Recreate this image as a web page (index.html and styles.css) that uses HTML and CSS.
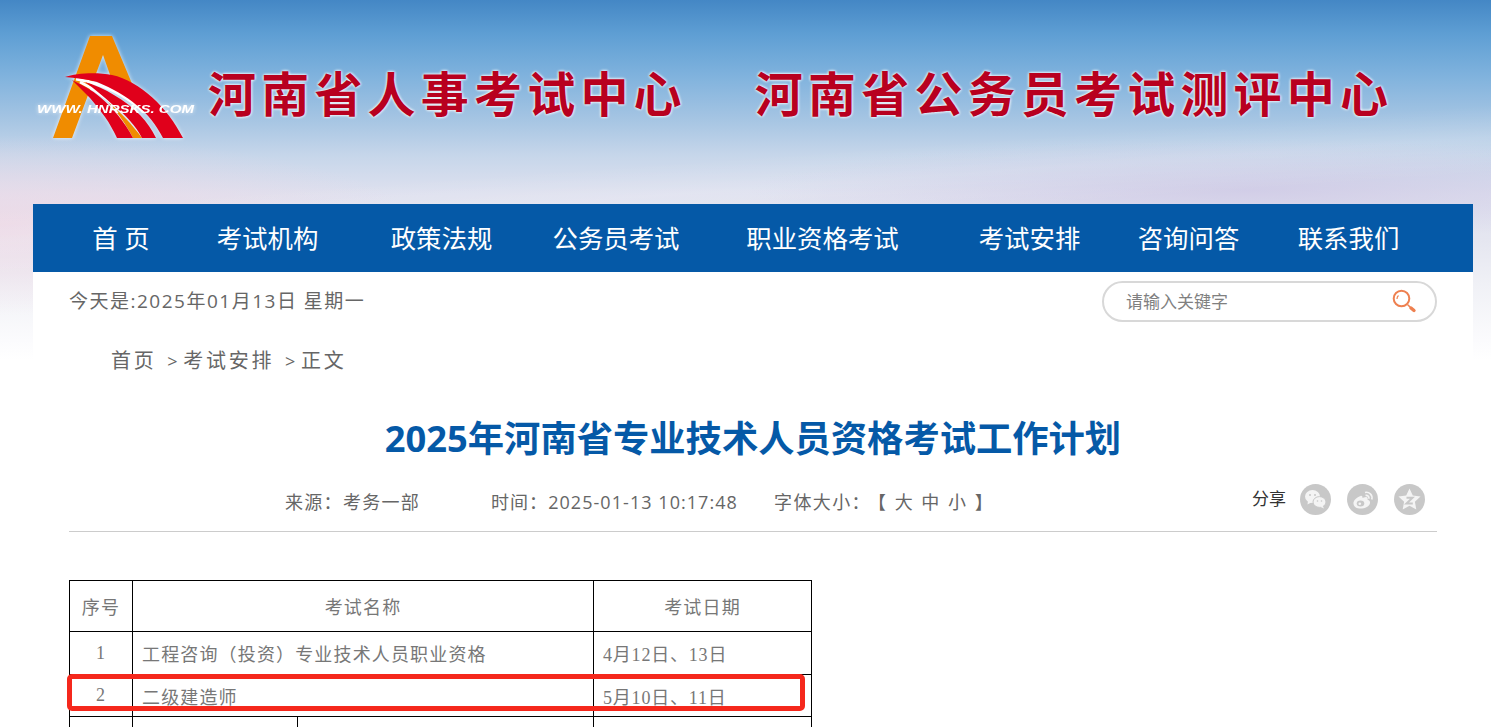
FILE: index.html
```html
<!DOCTYPE html>
<html lang="zh-CN">
<head>
  <meta charset="UTF-8">
  <title>2025年河南省专业技术人员资格考试工作计划</title>
  <link rel="stylesheet" href="styles.css">
</head>
<body>
  <div class="page">

    <header class="banner">
      <svg class="logo" width="170" height="120" viewBox="36 26 170 120">
        <path class="logo-a" d="M90 36 H112 L133 86 H114 L103 55 L72 138 H53 Z"/>
        <path class="logo-stripe" d="M108 102 C120 112 132 124 142 138 H133 C126 124 117 112 108 102 Z"/>
        <path class="logo-line" d="M76 79 C100 83 124 93 144 112"/>
        <path class="logo-line" d="M80 82 C92 88 104 96 116 106"/>
        <path class="logo-arc" d="M65 77 C76 73 97 72 112 75 C140 81 168 108 183 138 H163 C150 112 128 95 97 82 C86 79 75 78 65 77 Z"/>
        <path class="logo-arc" d="M85 82 C105 88 125 100 140 115 C147 122 152 130 156 138 H142 C136 126 125 114 113 105 C104 97 95 89 85 82 Z"/>
        <path class="logo-arc" d="M72 80 C82 85 92 90 100 97 C112 107 125 122 133 138 H117 C113 130 110 124 105 117 C100 110 95 104 90 98 C84 92 78 86 72 80 Z"/>
        <text class="logo-url" x="37" y="113" textLength="157" lengthAdjust="spacingAndGlyphs">WWW. HNRSKS. COM</text>
      </svg>
      <h1 class="site-name">河南省人事考试中心</h1>
      <h1 class="site-name second">河南省公务员考试测评中心</h1>
    </header>

    <main class="wrap">
      <nav class="nav">
        <a href="#">首 页</a>
        <a href="#">考试机构</a>
        <a href="#">政策法规</a>
        <a href="#">公务员考试</a>
        <a href="#">职业资格考试</a>
        <a href="#">考试安排</a>
        <a href="#">咨询问答</a>
        <a href="#">联系我们</a>
      </nav>

      <div class="topbar">
        <span class="today">今天是:2025年01月13日 星期一</span>
        <div class="search">
          <span class="search-text">请输入关键字</span>
          <svg width="26" height="26" viewBox="0 0 26 26">
            <circle class="search-ring" cx="10.5" cy="9.5" r="7.8"/>
            <path class="search-ring thin" d="M6 10 A4.5 4.5 0 0 1 7.5 6.5"/>
            <path class="search-handle" d="M17 16 L19 18"/>
            <path class="search-handle thick" d="M20 19 L23 21.5"/>
          </svg>
        </div>
      </div>

      <div class="crumbs">
        <a href="#">首页</a>
        <span class="crumb-sep">&gt;</span><a href="#">考试安排</a>
        <span class="crumb-sep">&gt;</span><span>正文</span>
      </div>

      <h2 class="title">2025年河南省专业技术人员资格考试工作计划</h2>

      <div class="meta">
        <span class="source">来源：考务一部</span>
        <span class="time">时间：2025-01-13 10:17:48</span>
        <span class="fontsize">字体大小：<span class="size-links">【 大 中 小 】</span></span>
        <div class="share">
          <span class="share-label">分享</span>
          <a class="share-btn" href="#">
            <svg width="31" height="31" viewBox="0 0 31 31">
              <ellipse class="glyph" cx="12.5" cy="12.5" rx="7.5" ry="6.4"/>
              <path class="glyph" d="M8 16.5 L7.5 20.5 L12 18 Z"/>
              <ellipse class="glyph edge" cx="19.5" cy="18" rx="6.5" ry="5.4"/>
              <path class="glyph" d="M22.5 21.5 L24 24.5 L20 22.8 Z"/>
              <circle class="dot" cx="10" cy="11" r="1"/>
              <circle class="dot" cx="15" cy="11" r="1"/>
              <circle class="dot" cx="17.5" cy="17" r=".8"/>
              <circle class="dot" cx="21.5" cy="17" r=".8"/>
            </svg>
          </a>
          <a class="share-btn" href="#">
            <svg width="31" height="31" viewBox="0 0 31 31">
              <path class="glyph" d="M13.5 12 C9 13.5 6 17 6.5 20 C7 23.5 11 25 15 24.5 C20 24 23.5 21 23 18 C22.7 16.5 21.5 16 20.5 15.5 C21 14 20.5 13 19 13 C17.5 13 16 14 15.5 14 C15.5 12.5 15 11.5 13.5 12 Z"/>
              <ellipse class="dot" cx="13.5" cy="19.5" rx="3.8" ry="3"/>
              <circle class="glyph" cx="12.8" cy="19.8" r="1.3"/>
              <path class="wave" d="M18 8.5 C22 7.5 26 11 24.8 15.5"/>
              <path class="wave" d="M18.5 11.5 C20.5 11 22.5 12.7 21.8 14.8"/>
            </svg>
          </a>
          <a class="share-btn" href="#">
            <svg width="31" height="31" viewBox="0 0 31 31">
              <path class="glyph" d="M15.5 4.5 L18.8 11.5 L26.500 12.500 L20.900 17.800 L22.300 25.500 L15.500 21.800 L8.700 25.500 L10.100 17.800 L4.500 12.500 L12.200 11.500 Z"/>
              <path class="z" d="M12.500 13.800 H18.500 L12.500 19.500 H18.800"/>
            </svg>
          </a>
        </div>
      </div>

      <div class="article">
        <table class="exam-table">
          <colgroup>
            <col class="c-no">
            <col class="c-sub">
            <col class="c-name">
            <col class="c-date">
          </colgroup>
          <tr class="row-head">
            <td class="center">序号</td>
            <td class="center" colspan="2">考试名称</td>
            <td class="center">考试日期</td>
          </tr>
          <tr class="row-one">
            <td class="center">1</td>
            <td colspan="2">工程咨询（投资）专业技术人员职业资格</td>
            <td class="date">4月12日、13日</td>
          </tr>
          <tr class="row-two">
            <td class="center">2</td>
            <td colspan="2">二级建造师</td>
            <td class="date">5月10日、11日</td>
          </tr>
          <tr class="row-three">
            <td></td>
            <td></td>
            <td></td>
            <td></td>
          </tr>
        </table>
        <div class="highlight"></div>
      </div>
    </main>
  </div>
</body>
</html>
```

FILE: styles.css
```css
html, body {
  margin: 0;
  padding: 0;
}

body {
  font-family: "Open Sans", "Noto Sans CJK SC", sans-serif;
  color: #666;
  background: #fff;
}

a {
  color: inherit;
  text-decoration: none;
}

.page {
  height: 727px;
  overflow: hidden;
  background:
    linear-gradient(176deg, transparent 45%, rgba(255, 255, 255, 0.12) 52%, transparent 60%) 0 0 / 100% 360px no-repeat,
    radial-gradient(ellipse 420px 90px at 0 225px, rgba(240, 215, 228, 0.75), transparent) 0 0 / 100% 360px no-repeat,
    radial-gradient(ellipse 500px 50px at 1250px 190px, rgba(205, 198, 228, 0.7), transparent) 0 0 / 100% 360px no-repeat,
    linear-gradient(180deg, #4487c5 0, #5f9fd4 35px, #7fb2dd 75px, #a6c5e3 120px, #c6d6ea 155px, #dfe1ef 195px, #e5e6f0 240px, #f0f1f6 285px, #fbfbfd 340px, #fff 360px) 0 0 / 100% 360px no-repeat;
}

.banner {
  height: 204px;
  display: flex;
  align-items: flex-start;
  padding-left: 36px;
  box-sizing: border-box;
}

.logo {
  margin-top: 26px;
  flex: none;
  filter: drop-shadow(0 0 2px rgba(255, 255, 255, 0.8));
}

.logo-a,
.logo-stripe {
  fill: #f08c00;
}

.logo-arc {
  fill: #e0001b;
}

.logo-line {
  fill: none;
  stroke: #fff;
  stroke-width: 3;
}

.logo-url {
  fill: #fff;
  font-family: "Liberation Sans", sans-serif;
  font-size: 11px;
  font-weight: 700;
  font-style: italic;
  filter: blur(0.5px);
}

.site-name {
  margin: 60px 0 0 2px;
  font-family: "Noto Sans CJK SC", sans-serif;
  font-size: 48px;
  line-height: 62px;
  font-weight: 700;
  letter-spacing: 5.2px;
  color: #b8001f;
  white-space: nowrap;
  text-shadow: 0 0 3px #fff, 0 0 3px #fff;
}

.second {
  margin-left: 68px;
}

.wrap {
  width: 1440px;
  margin-left: 33px;
  background: #fff;
  height: 523px;
}

.nav {
  height: 68px;
  padding-left: 6px;
  background: #0559a7;
  display: grid;
  grid-template-columns: 164px 129px 219px 130px 283px 131px 187px 133px;
}

.nav a {
  color: #fff;
  font-size: 25.4px;
  line-height: 68px;
  text-align: center;
  white-space: nowrap;
}

.topbar {
  height: 75px;
  padding: 9px 36px 0;
  box-sizing: border-box;
  display: flex;
  justify-content: space-between;
  align-items: flex-start;
}

.today {
  font-size: 19px;
  line-height: 41px;
  letter-spacing: 1.5px;
  color: #666;
}

.search {
  width: 335px;
  height: 41px;
  box-sizing: border-box;
  border: 2px solid #d8d8d8;
  border-radius: 21px;
  padding: 0 18px 0 22px;
  display: flex;
  align-items: center;
  justify-content: space-between;
}

.search-text {
  font-size: 17px;
  color: #808080;
  padding-bottom: 3px;
}

.search-ring {
  fill: none;
  stroke: #ee8050;
  stroke-width: 2;
}

.thin {
  stroke-width: 1.2;
}

.search-handle {
  fill: none;
  stroke: #ee8050;
  stroke-width: 1.6;
  stroke-linecap: round;
}

.thick {
  stroke-width: 3.4;
}

.crumbs {
  padding-left: 78px;
  font-size: 20px;
  line-height: 28px;
  letter-spacing: 2.7px;
  color: #666;
}

.crumb-sep {
  margin: 0 3px;
  font-size: 18px;
}

.title {
  margin: 38px 0 0;
  font-size: 36.3px;
  line-height: 50px;
  font-weight: 700;
  text-align: center;
  color: #0559a7;
}

.meta {
  margin: 14px 36px 0;
  height: 54px;
  border-bottom: 1px solid #ccc;
  display: flex;
  align-items: flex-start;
  font-size: 18px;
  line-height: 50px;
  color: #666;
}

.source {
  margin-left: 216px;
  width: 206px;
  letter-spacing: 1.3px;
}

.time {
  width: 283px;
  letter-spacing: 1.05px;
}

.fontsize {
  letter-spacing: 1.4px;
}

.size-links {
  margin-left: 6px;
  letter-spacing: 2px;
}

.share {
  margin-left: auto;
  display: flex;
  align-items: center;
  height: 44px;
  margin-right: 12px;
}

.share-label {
  font-size: 17px;
  color: #333;
  margin-right: 14px;
}

.share-btn {
  width: 31px;
  height: 31px;
  border-radius: 50%;
  background: #c8c8c8;
  margin-left: 16px;
  display: block;
}

.share-label + .share-btn {
  margin-left: 0;
}

.share-btn svg {
  display: block;
}

.glyph {
  fill: #f4f4f4;
}

.edge {
  stroke: #c8c8c8;
  stroke-width: 1;
}

.dot {
  fill: #c8c8c8;
}

.wave {
  fill: none;
  stroke: #f4f4f4;
  stroke-width: 1.6;
}

.z {
  fill: none;
  stroke: #c8c8c8;
  stroke-width: 2;
}

.article {
  position: relative;
  margin: 48px 36px 0;
}

.exam-table {
  border-collapse: collapse;
  table-layout: fixed;
  width: 742px;
  font-family: "Liberation Serif", "Noto Sans CJK SC", serif;
  font-size: 18px;
  color: #777;
}

.c-no { width: 63px; }
.c-sub { width: 165px; }
.c-name { width: 296px; }
.c-date { width: 218px; }

.exam-table td {
  border: 1px solid #000;
  padding: 0 9px;
  letter-spacing: 1.15px;
}

.exam-table .date {
  letter-spacing: 0.8px;
}

.center {
  text-align: center;
}

.row-head { height: 51px; }
.row-one { height: 43px; }
.row-two { height: 42px; }
.row-three { height: 42px; }

.highlight {
  position: absolute;
  left: -2px;
  top: 94px;
  width: 738px;
  height: 37px;
  box-sizing: border-box;
  border: 5px solid #f5281c;
  border-radius: 5px;
}
```
